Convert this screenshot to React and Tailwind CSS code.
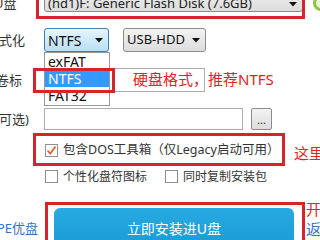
import React from 'react';

const FONT = "font-['Noto_Sans','Noto_Sans_CJK_SC',sans-serif]";

function Arrow() {
  return (
    <svg width="8" height="5" viewBox="0 0 8 5">
      <path d="M0 0h8L4 4.5z" fill="#111" />
    </svg>
  );
}

function CheckBox({ checked }) {
  return (
    <div className="w-[13px] h-[13px] border border-[#8f8f8f] bg-white flex items-center justify-center shrink-0">
      {checked && (
        <svg width="11" height="11" viewBox="0 0 11 11">
          <path d="M1.5 5.5l2.8 3L9.5 1.5" stroke="#e4632f" strokeWidth="1.8" fill="none" />
        </svg>
      )}
    </div>
  );
}

export default function App() {
  return (
    <div className={`relative w-[320px] h-[240px] overflow-hidden bg-white text-[#333] ${FONT}`}>
      <div className="flex flex-col">
        {/* disk select */}
        <div className="flex items-center h-[24px] -mt-[12px]">
          <div className="w-[44px] shrink-0 overflow-visible whitespace-nowrap">
            <span className="block -ml-[6px] mt-[6px] text-[13px] leading-none">U盘</span>
          </div>
          <div className="w-[259px] h-[24px] rounded-[3px] border border-[#8a8a8a] bg-gradient-to-b from-[#f3f3f3] to-[#dcdcdc] flex items-center justify-between pt-[8px] pl-[3px] pr-[5px] text-[13px] text-[#222] whitespace-nowrap">
            <span>(hd1)F: Generic Flash Disk (7.6GB)</span>
            <Arrow />
          </div>
        </div>

        {/* format */}
        <div className="flex items-center h-[24px] mt-[16px]">
          <div className="w-[44px] shrink-0 whitespace-nowrap">
            <span className="block -ml-[14px] text-[13px] leading-none">格式化</span>
          </div>
          <div className="w-[65px] h-[24px] rounded-[3px] border border-[#3c7fb1] bg-gradient-to-b from-[#e6f5fd] to-[#b9def5] flex items-center justify-between pl-[3px] pr-[5px] text-[14px] text-[#111] whitespace-nowrap">
            <span>NTFS</span>
            <Arrow />
          </div>
          <div className="ml-[14px] w-[83px] h-[24px] rounded-[3px] border border-[#8a8a8a] bg-gradient-to-b from-[#f3f3f3] to-[#dcdcdc] flex items-center justify-between pl-[3px] pr-[5px] text-[13px] text-[#111] whitespace-nowrap">
            <span>USB-HDD</span>
            <Arrow />
          </div>
        </div>

        {/* volume label */}
        <div className="flex items-center h-[24px] mt-[16px]">
          <div className="w-[44px] shrink-0 whitespace-nowrap">
            <span className="block -ml-[4px] text-[13px] leading-none">卷标</span>
          </div>
          <div className="w-[161px] h-[24px] border border-[#abadb3] bg-white" />
        </div>

        {/* optional */}
        <div className="flex items-center h-[22px] mt-[16px]">
          <div className="w-[44px] shrink-0 whitespace-nowrap">
            <span className="block -ml-[1px] text-[13px] leading-none">可选)</span>
          </div>
          <div className="w-[199px] h-[22px] border border-[#abadb3] bg-white" />
          <div className="ml-[8px] w-[21px] h-[22px] rounded-[2px] border border-[#8a8a8a] bg-gradient-to-b from-[#f3f3f3] to-[#dcdcdc] flex items-end justify-center pb-[4px] text-[11px] leading-none">...</div>
        </div>

        {/* DOS */}
        <div className="flex items-center h-[13px] mt-[14px] pl-[45px]">
          <CheckBox checked />
          <span className="ml-[5px] text-[12.5px] whitespace-nowrap">包含DOS工具箱（仅Legacy启动可用）</span>
        </div>

        {/* options */}
        <div className="flex items-center h-[13px] mt-[13px] pl-[45px]">
          <CheckBox />
          <span className="ml-[5px] text-[12px] whitespace-nowrap">个性化盘符图标</span>
          <div className="ml-[18px] flex items-center">
            <CheckBox />
            <span className="ml-[5px] text-[12px] whitespace-nowrap">同时复制安装包</span>
          </div>
        </div>

        {/* install */}
        <div className="flex items-center h-[40px] mt-[25px]">
          <div className="w-[54px] shrink-0 whitespace-nowrap">
            <span className="block -ml-[3px] text-[13px] leading-none text-[#2f74c0]">PE优盘</span>
          </div>
          <div className="w-[240px] h-[40px] rounded-[6px] bg-gradient-to-b from-[#27a9e1] to-[#1a9bd6] flex items-center justify-center text-white text-[14px]">
            立即安装进U盘
          </div>
        </div>
      </div>

      {/* open dropdown list */}
      <div className="absolute left-[44px] top-[52px] w-[66px] h-[54px] bg-white border border-[#979797] flex flex-col text-[14px] text-[#111]">
        <div className="h-[17px] flex items-center pl-[3px]">exFAT</div>
        <div className="h-[17px] flex items-center pl-[3px] bg-[#3399ff] text-white">NTFS</div>
        <div className="h-[17px] flex items-center pl-[3px]">FAT32</div>
      </div>

      {/* annotations */}
      <div className="absolute left-[36px] top-[-12px] w-[269px] h-[31px] border-[3px] border-[#d7232c]" />
      <div className="absolute left-[33px] top-[68px] w-[82px] h-[25px] border-[3px] border-[#d7232c]" />
      <div className="absolute left-[133px] top-[69px] text-[15px] leading-[20px] text-[#e3231f] whitespace-nowrap">硬盘格式，推荐NTFS</div>
      <div className="absolute left-[33px] top-[133px] w-[252px] h-[33px] border-[3px] border-[#d7232c]" />
      <div className="absolute left-[294px] top-[143px] text-[15px] leading-[20px] text-[#e3231f] whitespace-nowrap">这里</div>
      <div className="absolute left-[45px] top-[202px] w-[260px] h-[50px] border-[3px] border-[#d7232c]" />
      <div className="absolute left-[306px] top-[199px] text-[15px] leading-[20px] text-[#e3231f] whitespace-nowrap">开</div>
      <div className="absolute left-[306px] top-[219px] text-[15px] leading-[20px] text-[#2f74c0] whitespace-nowrap">返</div>
      <div className="absolute left-[313px] top-[-5px] w-[16px] h-[16px] rounded-full border-[3px] border-[#8cc63f] bg-[#e9f5d8]" />
    </div>
  );
}
